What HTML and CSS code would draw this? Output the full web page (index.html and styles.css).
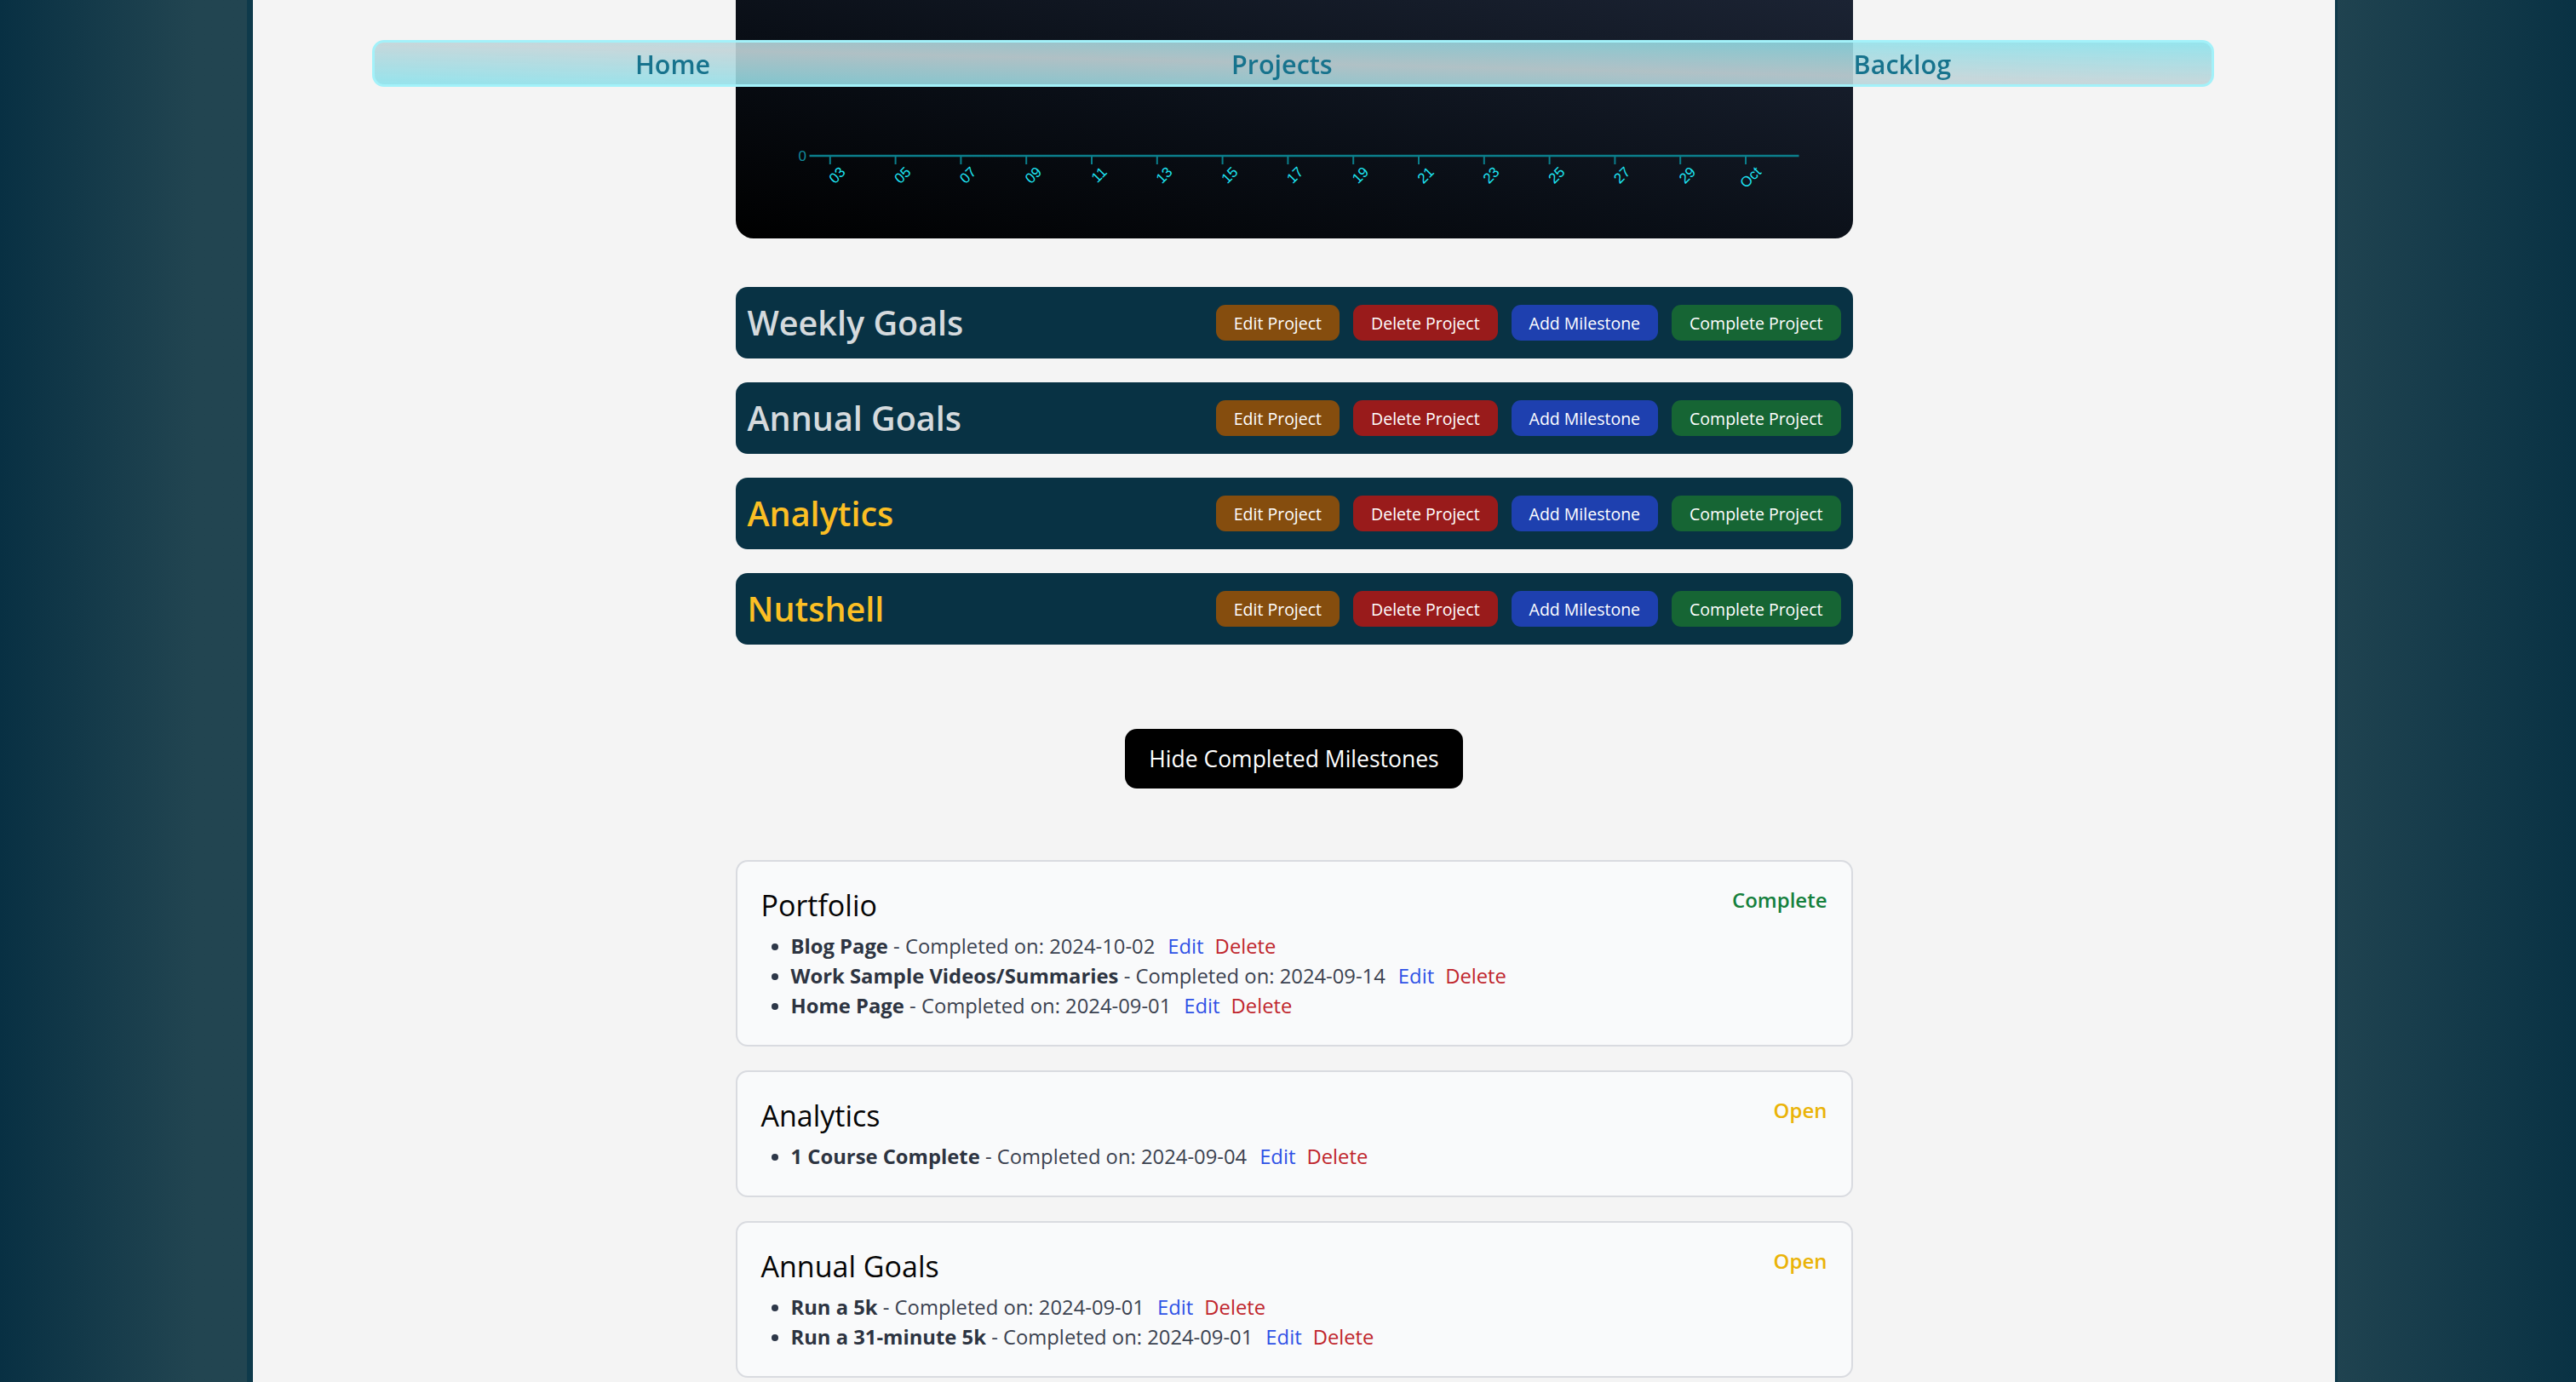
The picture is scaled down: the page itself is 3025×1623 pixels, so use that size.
FILE: index.html
```html
<!DOCTYPE html>
<html lang="en">
<head>
<meta charset="utf-8">
<title>Projects</title>
<link rel="stylesheet" href="styles.css">
</head>
<body>
<div class="page">
  <main class="content">
    <div class="chart">
      <svg class="chart-svg" width="1312" height="280" viewBox="0 0 1312 280" xmlns="http://www.w3.org/2000/svg">
        <text class="y-label" x="83" y="189" text-anchor="end">0</text>
        <line class="axis" x1="86.5" y1="183" x2="1248.5" y2="183"/>
        <g class="ticks">
          <line x1="110.8" y1="183" x2="110.8" y2="193"/>
          <line x1="187.6" y1="183" x2="187.6" y2="193"/>
          <line x1="264.4" y1="183" x2="264.4" y2="193"/>
          <line x1="341.2" y1="183" x2="341.2" y2="193"/>
          <line x1="418" y1="183" x2="418" y2="193"/>
          <line x1="494.8" y1="183" x2="494.8" y2="193"/>
          <line x1="571.6" y1="183" x2="571.6" y2="193"/>
          <line x1="648.4" y1="183" x2="648.4" y2="193"/>
          <line x1="725.2" y1="183" x2="725.2" y2="193"/>
          <line x1="802" y1="183" x2="802" y2="193"/>
          <line x1="878.8" y1="183" x2="878.8" y2="193"/>
          <line x1="955.6" y1="183" x2="955.6" y2="193"/>
          <line x1="1032.4" y1="183" x2="1032.4" y2="193"/>
          <line x1="1109.2" y1="183" x2="1109.2" y2="193"/>
          <line x1="1186" y1="183" x2="1186" y2="193"/>
        </g>
        <g class="x-labels" text-anchor="end">
          <text x="129.8" y="203" transform="rotate(-45 129.8 203)">03</text>
          <text x="206.6" y="203" transform="rotate(-45 206.6 203)">05</text>
          <text x="283.4" y="203" transform="rotate(-45 283.4 203)">07</text>
          <text x="360.2" y="203" transform="rotate(-45 360.2 203)">09</text>
          <text x="437" y="203" transform="rotate(-45 437 203)">11</text>
          <text x="513.8" y="203" transform="rotate(-45 513.8 203)">13</text>
          <text x="590.6" y="203" transform="rotate(-45 590.6 203)">15</text>
          <text x="667.4" y="203" transform="rotate(-45 667.4 203)">17</text>
          <text x="744.2" y="203" transform="rotate(-45 744.2 203)">19</text>
          <text x="821" y="203" transform="rotate(-45 821 203)">21</text>
          <text x="897.8" y="203" transform="rotate(-45 897.8 203)">23</text>
          <text x="974.6" y="203" transform="rotate(-45 974.6 203)">25</text>
          <text x="1051.4" y="203" transform="rotate(-45 1051.4 203)">27</text>
          <text x="1128.2" y="203" transform="rotate(-45 1128.2 203)">29</text>
          <text x="1205" y="203" transform="rotate(-45 1205 203)">Oct</text>
        </g>
      </svg>
    </div>

    <section class="projects">
      <div class="project-row">
        <h2 class="project-title">Weekly Goals</h2>
        <div class="actions">
          <button class="btn btn-edit">Edit Project</button>
          <button class="btn btn-delete">Delete Project</button>
          <button class="btn btn-add">Add Milestone</button>
          <button class="btn btn-complete">Complete Project</button>
        </div>
      </div>
      <div class="project-row">
        <h2 class="project-title">Annual Goals</h2>
        <div class="actions">
          <button class="btn btn-edit">Edit Project</button>
          <button class="btn btn-delete">Delete Project</button>
          <button class="btn btn-add">Add Milestone</button>
          <button class="btn btn-complete">Complete Project</button>
        </div>
      </div>
      <div class="project-row">
        <h2 class="project-title gold">Analytics</h2>
        <div class="actions">
          <button class="btn btn-edit">Edit Project</button>
          <button class="btn btn-delete">Delete Project</button>
          <button class="btn btn-add">Add Milestone</button>
          <button class="btn btn-complete">Complete Project</button>
        </div>
      </div>
      <div class="project-row">
        <h2 class="project-title gold">Nutshell</h2>
        <div class="actions">
          <button class="btn btn-edit">Edit Project</button>
          <button class="btn btn-delete">Delete Project</button>
          <button class="btn btn-add">Add Milestone</button>
          <button class="btn btn-complete">Complete Project</button>
        </div>
      </div>
    </section>

    <div class="toggle-wrap">
      <button class="toggle">Hide Completed Milestones</button>
    </div>

    <section class="cards">
      <article class="card">
        <div class="card-head">
          <h3 class="card-title">Portfolio</h3>
          <span class="status status-done">Complete</span>
        </div>
        <ul class="milestones">
          <li><strong>Blog Page</strong> - Completed on: 2024-10-02<a class="link-edit">Edit</a><a class="link-del">Delete</a></li>
          <li><strong>Work Sample Videos/Summaries</strong> - Completed on: 2024-09-14<a class="link-edit">Edit</a><a class="link-del">Delete</a></li>
          <li><strong>Home Page</strong> - Completed on: 2024-09-01<a class="link-edit">Edit</a><a class="link-del">Delete</a></li>
        </ul>
      </article>
      <article class="card">
        <div class="card-head">
          <h3 class="card-title">Analytics</h3>
          <span class="status status-open">Open</span>
        </div>
        <ul class="milestones">
          <li><strong>1 Course Complete</strong> - Completed on: 2024-09-04<a class="link-edit">Edit</a><a class="link-del">Delete</a></li>
        </ul>
      </article>
      <article class="card">
        <div class="card-head">
          <h3 class="card-title">Annual Goals</h3>
          <span class="status status-open">Open</span>
        </div>
        <ul class="milestones">
          <li><strong>Run a 5k</strong> - Completed on: 2024-09-01<a class="link-edit">Edit</a><a class="link-del">Delete</a></li>
          <li><strong>Run a 31-minute 5k</strong> - Completed on: 2024-09-01<a class="link-edit">Edit</a><a class="link-del">Delete</a></li>
        </ul>
      </article>
    </section>
  </main>
</div>

<nav class="topnav">
  <a class="nav-link">Home</a>
  <a class="nav-link">Projects</a>
  <a class="nav-link">Backlog</a>
</nav>
</body>
</html>
```

FILE: styles.css
```css
html, body {
  margin: 0;
  padding: 0;
}

html {
  overflow: hidden;
}

body {
  min-height: 1623px;
  font-family: "Segoe UI", "Open Sans", "Noto Sans", sans-serif;
  background: linear-gradient(to right, #083043 0%, #224551 7.6%, #214450 50%, #204350 90.6%, #093244 100%);
}

.page {
  margin-left: 297px;
  width: 2445px;
  min-height: 1623px;
  background: #f4f4f4;
  box-shadow: -7px 0 0 #0e3a4b, 3px 0 0 #0e3a4b;
}

.content {
  width: 1312px;
  margin: 0 auto;
}

/* Chart */
.chart {
  height: 280px;
  border-radius: 0 0 21px 21px;
  background: linear-gradient(to top right, #000000 0%, #0a0f17 45%, #1b2333 100%);
  overflow: hidden;
}

.chart-svg {
  display: block;
  font-family: "Liberation Sans", Arial, sans-serif;
  font-size: 17px;
}

.y-label {
  fill: #128a9a;
}

.axis {
  stroke: #0b7f8c;
  stroke-width: 2.5;
}

.ticks line {
  stroke: #0b7f8c;
  stroke-width: 2;
}

.x-labels text {
  fill: #1ee4f3;
}

/* Project rows */
.projects {
  margin-top: 57px;
  display: flex;
  flex-direction: column;
  gap: 28px;
}

.project-row {
  height: 84px;
  box-sizing: border-box;
  padding: 0 14px;
  background: #083244;
  border-radius: 14px;
  display: flex;
  align-items: center;
  justify-content: space-between;
}

.project-title {
  margin: 0;
  font-size: 39.5px;
  line-height: 56px;
  font-weight: 600;
  color: #d5dadd;
}

.project-title.gold {
  color: #fbbf24;
}

.actions {
  display: flex;
  gap: 16px;
}

.btn {
  height: 42px;
  padding: 0 21px;
  border: 0;
  border-radius: 11px;
  font-family: inherit;
  font-size: 19.5px;
  color: #ffffff;
  cursor: pointer;
}

.btn-edit { background: #854d0e; }
.btn-delete { background: #991b1b; }
.btn-add { background: #1e40af; }
.btn-complete { background: #166534; }

/* Toggle */
.toggle-wrap {
  margin-top: 99px;
  display: flex;
  justify-content: center;
}

.toggle {
  height: 70px;
  padding: 0 28px;
  border: 0;
  border-radius: 14px;
  background: #000000;
  color: #ffffff;
  font-family: inherit;
  font-size: 26.5px;
  cursor: pointer;
}

/* Cards */
.cards {
  margin-top: 84px;
  display: flex;
  flex-direction: column;
  gap: 28px;
}

.card {
  background: #f9fafb;
  border: 2px solid #d9dbe0;
  border-radius: 14px;
  padding: 27px 28px 28px;
}

.card-head {
  display: flex;
  justify-content: space-between;
  align-items: flex-start;
  margin-bottom: 6px;
}

.card-title {
  margin: 0;
  font-size: 34px;
  line-height: 49px;
  font-weight: 500;
  color: #050505;
}

.status {
  font-size: 24px;
  line-height: 35px;
  font-weight: 600;
}

.status-done { color: #15803d; }
.status-open { color: #eab308; }

.milestones {
  margin: 0;
  padding-left: 35px;
  list-style: disc;
  font-size: 23.8px;
  line-height: 35px;
  color: #3b4250;
}

.milestones li::marker {
  color: #2d3748;
}

.milestones strong {
  font-weight: 700;
  color: #2d3441;
}

.link-edit {
  margin-left: 15px;
  color: #2f52e6;
  cursor: pointer;
}

.link-del {
  margin-left: 13px;
  color: #c0262d;
  cursor: pointer;
}

/* Fixed top navigation overlaying content */
.topnav {
  position: fixed;
  top: 47px;
  left: 437px;
  width: 2163px;
  height: 55px;
  box-sizing: border-box;
  border: 3px solid #a3f1f9;
  border-radius: 14px;
  background: linear-gradient(to top right, rgba(136, 225, 235, 0.88) 0%, rgba(194, 212, 216, 0.9) 50%, rgba(136, 225, 235, 0.88) 100%);
  display: flex;
  justify-content: space-around;
  align-items: center;
}

.nav-link {
  font-size: 30.5px;
  font-weight: 600;
  color: #17738d;
  cursor: pointer;
}
```
